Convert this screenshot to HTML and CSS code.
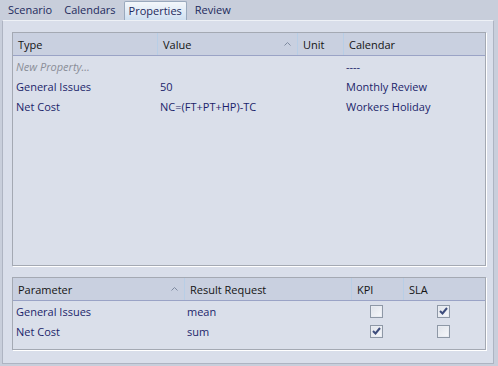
FILE: index.html
```html
<!DOCTYPE html>
<html>
<head>
<meta charset="utf-8">
<link rel="stylesheet" href="styles.css">
</head>
<body>
<div class="tabs">
  <div class="tab">Scenario</div>
  <div class="tab">Calendars</div>
  <div class="tab active">Properties</div>
  <div class="tab">Review</div>
</div>
<div class="page">
  <div class="box top-box">
    <div class="row head">
      <div class="c c-type">Type</div>
      <div class="c c-value sep">Value<svg class="arrow" width="7" height="4" viewBox="0 0 7 4"><path d="M0.5 3.5 L3.5 0.5 L6.5 3.5" fill="none" stroke="#7e8aa0" stroke-width="1"/></svg></div>
      <div class="c c-unit sep">Unit</div>
      <div class="c c-cal sep">Calendar</div>
    </div>
    <div class="row data">
      <div class="c c-type new">New Property...</div>
      <div class="c c-value"></div>
      <div class="c c-unit"></div>
      <div class="c c-cal">----</div>
    </div>
    <div class="row data">
      <div class="c c-type">General Issues</div>
      <div class="c c-value">50</div>
      <div class="c c-unit"></div>
      <div class="c c-cal">Monthly Review</div>
    </div>
    <div class="row data">
      <div class="c c-type">Net Cost</div>
      <div class="c c-value">NC=(FT+PT+HP)-TC</div>
      <div class="c c-unit"></div>
      <div class="c c-cal">Workers Holiday</div>
    </div>
  </div>
  <div class="box bottom-box">
    <div class="row head head2">
      <div class="c c-param">Parameter<svg class="arrow arrow2" width="7" height="4" viewBox="0 0 7 4"><path d="M0.5 3.5 L3.5 0.5 L6.5 3.5" fill="none" stroke="#7e8aa0" stroke-width="1"/></svg></div>
      <div class="c c-res sep">Result Request</div>
      <div class="c c-kpi sep">KPI</div>
      <div class="c c-sla sep">SLA</div>
    </div>
    <div class="row data">
      <div class="c c-param">General Issues</div>
      <div class="c c-res">mean</div>
      <div class="c c-kpi"><span class="cb"></span></div>
      <div class="c c-sla"><span class="cb checked"><svg width="9" height="8" viewBox="0 0 9 8"><path d="M1 4 L3.5 6.5 L8 1" fill="none" stroke="#3d4c7c" stroke-width="2"/></svg></span></div>
    </div>
    <div class="row data">
      <div class="c c-param">Net Cost</div>
      <div class="c c-res">sum</div>
      <div class="c c-kpi"><span class="cb checked"><svg width="9" height="8" viewBox="0 0 9 8"><path d="M1 4 L3.5 6.5 L8 1" fill="none" stroke="#3d4c7c" stroke-width="2"/></svg></span></div>
      <div class="c c-sla"><span class="cb"></span></div>
    </div>
  </div>
</div>
</body>
</html>
```
FILE: styles.css
```css
html, body {
  margin: 0;
  padding: 0;
}
body {
  width: 498px;
  height: 366px;
  background: #c8cedb;
  font-family: "Open Sans", "Noto Sans", sans-serif;
  font-size: 11px;
  overflow: hidden;
}
.tabs {
  display: flex;
  height: 20px;
  padding-left: 2px;
  align-items: flex-end;
}
.tab {
  color: #1d2a5c;
  padding: 0 6px;
  height: 18px;
  line-height: 16px;
  box-sizing: border-box;
}
.tab.active {
  background: linear-gradient(#f4f7fb, #cfe0f1);
  border: 1px solid #9aa9bd;
  border-bottom: none;
  border-radius: 2px 2px 0 0;
  padding: 0 4px;
  margin: 0 2px;
  height: 19px;
  line-height: 17px;
}
.page {
  margin-left: 2px;
  width: 492px;
  height: 344px;
  box-sizing: border-box;
  background: #d9deea;
  border-left: 1px solid #aeb4c2;
  border-right: 1px solid #aeb4c2;
  border-bottom: 1px solid #aeb4c2;
  border-top: 1px solid #eef1f6;
  padding: 11px 0 0 9px;
}
.box {
  width: 474px;
  box-sizing: border-box;
  border: 1px solid #a4a9b3;
  box-shadow: 1px 1px 0 #ffffff;
  background: #dadfea;
}
.top-box { height: 234px; }
.bottom-box { height: 73px; margin-top: 11px; }
.row {
  display: flex;
  height: 20px;
  align-items: center;
}
.head {
  height: 23px;
  background: #c9d0e0;
  border-bottom: 1px solid #9aa3c6;
  box-sizing: border-box;
  color: #111;
}
.c {
  box-sizing: border-box;
  height: 100%;
  display: flex;
  align-items: center;
  white-space: nowrap;
  position: relative;
  color: #1c1f6a;
  padding-left: 3px;
}
.head .c {
  color: #141414;
  padding-left: 5px;
}
.head .c.sep {
  border-left: 1px solid #b8cee6;
}
.c-type { width: 144px; }
.c-value { width: 140px; }
.c-unit { width: 46px; }
.c-cal { flex: 1; }
.new {
  color: #8a8e98;
  font-style: italic;
}
.arrow {
  position: absolute;
  right: 6px;
  top: 9px;
}
.c-param { width: 171px; }
.c-res { width: 167px; }
.c-kpi { width: 52px; }
.c-sla { flex: 1; }
.data .c-kpi { padding-left: 19px; }
.data .c-sla { padding-left: 34px; }
.cb {
  display: flex;
  align-items: center;
  justify-content: center;
  width: 13px;
  height: 13px;
  box-sizing: border-box;
  border: 1px solid #8e98a6;
  background: linear-gradient(135deg, #dfe3ea, #f7f8fb);
  box-shadow: inset 0 0 0 1px #e9ecf2;
}
.cb svg { display: block; }
```
